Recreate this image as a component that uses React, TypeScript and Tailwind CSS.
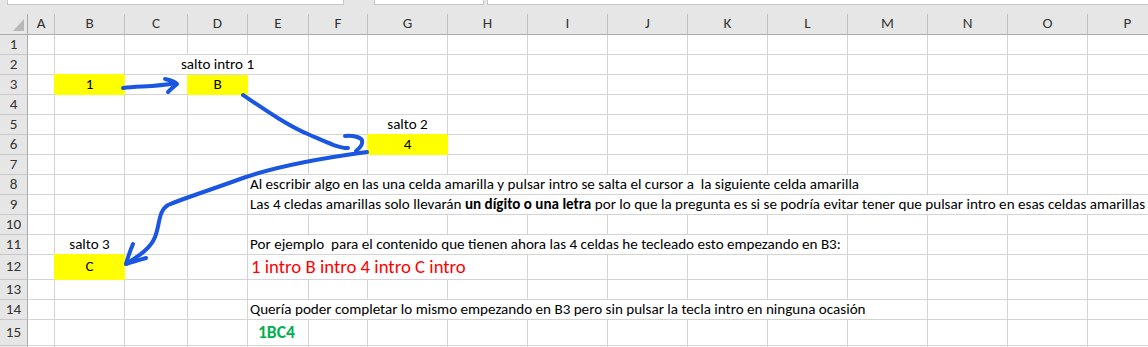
import React from "react";

type Cell = {
  col: number;
  span?: number;
  text?: React.ReactNode;
  className?: string;
  hideRight?: boolean;
  yellow?: boolean;
};

const LETTERS = ["A", "B", "C", "D", "E", "F", "G", "H", "I", "J", "K", "L", "M", "N", "O", "P"];

const SPAN: Record<number, string> = {
  1: "col-span-1",
  2: "col-span-2",
  3: "col-span-3",
  4: "col-span-4",
  5: "col-span-5",
  6: "col-span-6",
  7: "col-span-7",
  8: "col-span-8",
  9: "col-span-9",
  10: "col-span-10",
  11: "col-span-11",
  12: "col-span-12",
};

// special cells per row (col index: A=0, B=1 ...)
const sheet: Record<number, Cell[]> = {
  2: [
    { col: 2, hideRight: true },
    { col: 3, hideRight: true, text: "salto intro 1", className: "relative z-10 justify-center" },
  ],
  3: [
    { col: 1, yellow: true, text: "1", className: "justify-center" },
    { col: 3, yellow: true, text: "B", className: "justify-center" },
  ],
  5: [{ col: 6, text: "salto 2", className: "justify-center" }],
  6: [{ col: 6, yellow: true, text: "4", className: "justify-center" }],
  8: [
    {
      col: 4,
      span: 9,
      className: "pl-[2px]",
      text: "Al escribir algo en las una celda amarilla y pulsar intro se salta el cursor a  la siguiente celda amarilla",
    },
  ],
  9: [
    {
      col: 4,
      span: 12,
      className: "pl-[2px]",
      text: (
        <>
          Las 4 cledas amarillas solo llevarán <b>un dígito o una letra</b> por lo que la pregunta es si se podría evitar
          tener que pulsar intro en esas celdas amarillas
        </>
      ),
    },
  ],
  11: [
    { col: 1, text: "salto 3", className: "justify-center" },
    {
      col: 4,
      span: 8,
      className: "pl-[2px]",
      text: "Por ejemplo  para el contenido que tienen ahora las 4 celdas he tecleado esto empezando en B3:",
    },
  ],
  12: [
    { col: 1, yellow: true, text: "C", className: "justify-center" },
    {
      col: 4,
      span: 4,
      className: "pl-[3px] text-[18.8px] text-[#ff0000]",
      text: "1 intro B intro 4 intro C intro",
    },
  ],
  14: [
    {
      col: 4,
      span: 9,
      className: "pl-[2px]",
      text: "Quería poder completar lo mismo empezando en B3 pero sin pulsar la tecla intro en ninguna ocasión",
    },
  ],
  15: [{ col: 4, className: "pl-[10px] text-[17.5px] font-bold text-[#00b050]", text: "1BC4" }],
};

const ROWS = Array.from({ length: 16 }, (_, i) => i + 1);

function SheetRow({ n }: { n: number }) {
  const specials = sheet[n] || [];
  const out: React.ReactNode[] = [];
  out.push(
    <div
      key="h"
      className="bg-[#e6e6e6] border-r border-r-[#ababab] border-b border-b-[#c8c8c8] flex items-center justify-center text-[#333]"
    >
      {n}
    </div>
  );
  let c = 0;
  while (c < LETTERS.length) {
    const cell = specials.find((s) => s.col === c);
    const span = cell?.span ?? 1;
    const right = cell?.yellow ? "border-r-[#ffff00]" : cell?.hideRight ? "border-r-white" : "border-r-[#d4d4d4]";
    const bottom = cell?.yellow ? "border-b-[#ffff00]" : "border-b-[#d4d4d4]";
    out.push(
      <div
        key={c}
        className={`${SPAN[span]} border-r border-b ${right} ${bottom} flex items-center whitespace-pre min-w-0 ${
          cell?.yellow ? "relative bg-[#ffff00] shadow-[-1px_-1px_0_0_#ffff00]" : "bg-white"
        } ${cell?.className ?? ""}`}
      >
        {cell?.text}
      </div>
    );
    c += span;
  }
  return <>{out}</>;
}

function Arrows() {
  return (
    <svg className="absolute inset-0 z-20 pointer-events-none" width="1148" height="347" viewBox="0 0 1148 347">
      <g fill="none" stroke="#1a56e0" strokeWidth="4" strokeLinecap="round" strokeLinejoin="round">
        {/* B3 -> D3 */}
        <path d="M123,88 C140,86 156,87 175,83" />
        <path d="M165,79 C170,80 175,82 177,84 C174,86 171,89 168,92" />
        {/* D3 -> G6 */}
        <path d="M243,95 C268,112 290,127 310,135 C326,142 338,148 348,148" />
        <path d="M345,136 C352,135 360,137 362,140 C363,144 360,148 356,151" />
        {/* G6 -> B12 */}
        <path d="M367,152 C330,157 280,165 243,178 C210,190 185,198 168,205 C158,211 160,225 155,237 C150,250 135,258 126,264" />
        <path d="M133,244 C130,251 128,257 126,264 C132,262 139,260 146,258" />
      </g>
    </svg>
  );
}

export default function App() {
  return (
    <div
      className="relative w-[1148px] h-[347px] overflow-hidden bg-white text-[15.1px] leading-none text-black"
      style={{ fontFamily: "Calibri, Carlito, Lato, 'Liberation Sans', sans-serif" }}
    >
      {/* formula bar strip */}
      <div className="h-[14px] bg-[#e6e6e6] flex items-start">
        <div className="ml-[7px] w-[337px] h-[5px] bg-white border-l border-r border-b border-[#c6c6c6]" />
        <div className="ml-[30px] w-[110px] h-[5px] bg-white border-l border-r border-b border-[#c6c6c6]" />
        <div className="ml-[3px] flex-1 h-[5px] bg-white border-l border-b border-[#c6c6c6]" />
      </div>

      <div className="grid grid-cols-[28px_27px_70px_63px_60px_61px_59px_repeat(10,80px)] grid-rows-[21px_repeat(11,20px)_25px_20px_20px_26px_20px]">
        {/* column headers */}
        <div className="relative bg-[#e6e6e6] border-r border-r-[#ababab] border-b border-b-[#ababab]">
          <svg className="absolute right-[3px] bottom-[3px]" width="11" height="12" viewBox="0 0 11 12">
            <polygon points="11,0 11,12 0,12" fill="#b8b8b8" />
          </svg>
        </div>
        {LETTERS.map((l) => (
          <div
            key={l}
            className="bg-[#e6e6e6] border-r border-r-[#c0c0c0] border-b border-b-[#ababab] flex items-center justify-center text-[#333]"
          >
            {l}
          </div>
        ))}
        {ROWS.map((n) => (
          <SheetRow key={n} n={n} />
        ))}
      </div>

      <Arrows />
    </div>
  );
}
